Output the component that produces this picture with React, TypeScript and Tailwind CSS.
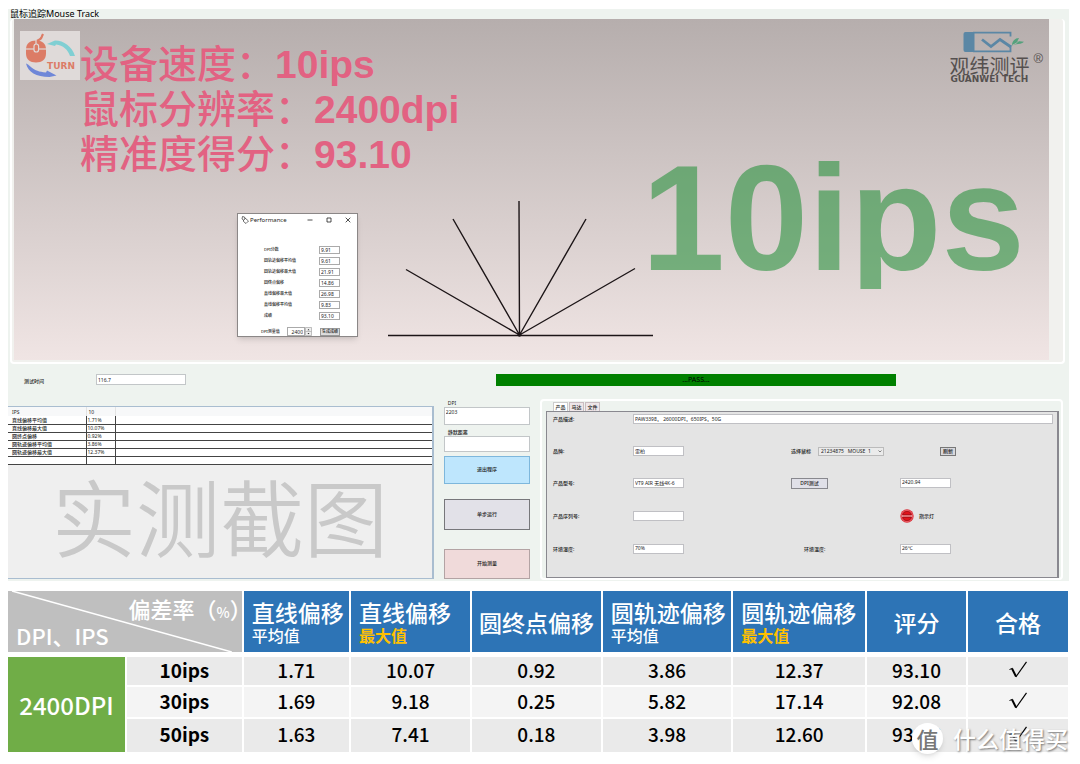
import React, { useId } from "react";

const sans = "font-['Noto_Sans','Noto_Sans_CJK_SC',sans-serif]";
const cjk = "font-['Noto_Sans_CJK_SC',sans-serif]";

function TurnLogo() {
  return (
    <svg viewBox="0 0 60 49" className="h-[49px] w-[60px] shrink-0 bg-[#dfdad9]" aria-label="Turn">
      <path d="M16 13c0-5 4-3 5.500-6.500C22 5 22.500 4 23 3" fill="none" stroke="#dc7c66" strokeWidth="2.200" />
      <path d="M6 18.500c0-6 4-9 10-9s10 3 10 9v4c0 6-4 9-10 9s-10-3-10-9z" fill="#dc7c66" />
      <path d="M5 18h22" stroke="#dfdad9" strokeWidth="1.200" />
      <path d="M16 9v9" stroke="#dfdad9" strokeWidth="1.200" />
      <rect x="14" y="13" width="4.600" height="8" rx="2.300" fill="#dc7c66" stroke="#dfdad9" strokeWidth="1.200" />
      <path d="M27 13l8-3.500c9 0 17 6 20 15.500h-5c-2-6-7-11-14-11.500l-1 1.500z" fill="#80cfd3" />
      <path d="M6 32.500c4 1 6 8 20 9l1-2 9.500 5-7 1.500C16 46 8 41 6 32.500z" fill="#6f87d8" />
      <text x="27" y="37.500" fontSize="9" fontWeight="800" fontFamily="DejaVu Sans" fill="#dc7c66">TURN</text>
    </svg>
  );
}

function Brand() {
  return (
    <div className="flex items-start text-[#55504f]">
      <div className="flex w-20 flex-col items-center">
        <svg viewBox="0 0 62 22" className="mr-1 h-[22px] w-[62px] self-end" aria-hidden="true">
          <path d="M2.500 1h9v20h-9a2 2 0 0 1-2-2V3a2 2 0 0 1 2-2z" fill="#5b87a5" />
          <path d="M10 1.700h37.500V5.500M10 20.300h37.500V14" fill="none" stroke="#5b87a5" strokeWidth="1.800" />
          <path d="M19 8.500l9 7 9-7 11 7.500" fill="none" stroke="#5b87a5" strokeWidth="2.800" />
          <path d="M49 14.500c0-5 4-7.500 7-7.500l-1.500 3 6.500.700c-3 3-8 1.800-12 3.800z" fill="#55a17d" />
          <path d="M49.500 14c3-1 5-2.500 6-4" fill="none" stroke="#c0b8b7" strokeWidth=".8" />
        </svg>
        <span className={`mt-[3px] text-[20px] leading-5 whitespace-nowrap ${cjk}`}>观纬测评</span>
        <span className="text-[9px] leading-[7px] font-bold whitespace-nowrap font-['DejaVu_Sans',sans-serif]">GUANWEI TECH</span>
      </div>
      <span className="mt-5 ml-1 text-[13px] leading-4 font-['Liberation_Sans',sans-serif]">®</span>
    </div>
  );
}

const scores = [
  ["DPI分数", "9.91"],
  ["圆轨迹偏移平均值", "9.61"],
  ["圆轨迹偏移最大值", "21.91"],
  ["圆终点偏移", "14.86"],
  ["直线偏移最大值", "26.98"],
  ["直线偏移平均值", "9.83"],
  ["成绩", "93.10"],
];

function ScoreRow({ label, value }: { label: string; value: string }) {
  const id = useId();
  return (
    <div className="flex h-[11px] items-center justify-between">
      <label htmlFor={id} className="text-[4px] leading-[6px] font-medium">{label}</label>
      <input id={id} defaultValue={value} className="h-2 w-[21px] border border-[#aaa] bg-white pl-px text-[5px] leading-[6px]" />
    </div>
  );
}

function PerformanceWindow() {
  return (
    <section className="absolute top-[194px] left-[223px] h-[124px] w-[121px] overflow-hidden border border-[#8b8787] bg-white text-[#222] shadow-md">
      <header className="flex h-3 items-center pr-[6px] pl-[3px]">
        <svg viewBox="0 0 8 8" className="h-2 w-2" fill="none" stroke="#333" strokeWidth=".7" aria-hidden="true">
          <path d="M1.500.500l2 .5.500 2-1.500 1-1.500-1zM4 2l3.500 3L5 7.500 2.500 5.500 2.500 4" />
        </svg>
        <h2 className="ml-px flex-1 text-[6px] leading-2">Performance</h2>
        <div className="flex gap-[13px]">
          <button aria-label="Minimize"><svg viewBox="0 0 6 6" className="h-[6px] w-[6px]" stroke="#222" strokeWidth=".8"><path d="M.5 3h5" /></svg></button>
          <button aria-label="Maximize"><svg viewBox="0 0 6 6" className="h-[6px] w-[6px]" stroke="#222" strokeWidth=".8" fill="none"><path d="M1 1h4v4H1z" /></svg></button>
          <button aria-label="Close"><svg viewBox="0 0 6 6" className="h-[6px] w-[6px]" stroke="#222" strokeWidth=".8"><path d="M.7.700l4.600 4.600M5.300.700L.7 5.300" /></svg></button>
        </div>
      </header>
      <div className="mt-[18px] pr-[17px] pl-[26px]">
        {scores.map(([l, v]) => <ScoreRow key={l} label={l} value={v} />)}
      </div>
      <div className="mt-[6px] flex items-center pl-[23px] text-[4px] leading-[6px] font-medium">
        <label htmlFor="dpi-measured" className="w-[26px]">DPI测量值</label>
        <input id="dpi-measured" defaultValue="2400" className="h-[9px] w-[18px] border border-[#aaa] pr-px text-right text-[5px] font-normal" />
        <svg viewBox="0 0 7 9" className="h-[9px] w-[7px] bg-[#eee]" aria-hidden="true">
          <path d="M.5.500h6v8h-6zM.5 4.500h6" fill="none" stroke="#aaa" strokeWidth=".7" />
          <path d="M2.500 3.200l1-1.200 1 1.200zM2.500 6l1 1.200 1-1.200z" fill="#222" />
        </svg>
        <button className="ml-2 h-2 w-5 border border-[#999] bg-[#ddd] whitespace-nowrap">生成成绩</button>
      </div>
    </section>
  );
}

function Rays() {
  return (
    <svg viewBox="0 0 268 138" className="absolute top-[180px] left-[373px] h-[138px] w-[268px]" stroke="#1c1517" strokeWidth="1.400" aria-hidden="true">
      <path d="M1 136.500h265M132.500 137L132 2M132.500 136L66 20M132.500 136L19 70.500M132.500 136L199 20M132.500 136L248 69.500" fill="none" />
      <circle cx="132.500" cy="136" r="1.800" stroke="none" fill="#1c1517" />
    </svg>
  );
}

function Headline() {
  const num = "font-bold leading-none font-['Liberation_Sans',Arial,sans-serif]";
  return (
    <div className={`mt-2 text-[39px] leading-[45px] font-medium whitespace-nowrap text-[#e26282] ${cjk}`}>
      <p className="h-[45px]">设备速度：<span className={num}>10ips</span></p>
      <p className="h-[45px]">鼠标分辨率：<span className={num}>2400dpi</span></p>
      <p className="h-[45px]">精准度得分：<span className={num}>93.10</span></p>
    </div>
  );
}

const results = [
  ["直线偏移平均值", "1.71%"],
  ["直线偏移最大值", "10.07%"],
  ["圆终点偏移", "0.92%"],
  ["圆轨迹偏移平均值", "3.86%"],
  ["圆轨迹偏移最大值", "12.37%"],
  ["", ""],
];

function ResultsPane() {
  return (
    <div className="mt-[7px] flex h-[173px] flex-col border-y border-r-2 border-[#a9bdd0] bg-[#efefef]">
      <table className="w-full table-fixed border-collapse bg-white text-left text-[5px] leading-[6px] text-[#222]">
        <colgroup><col className="w-[78px]" /><col className="w-[29px]" /><col /></colgroup>
        <thead>
          <tr className="h-[9px] bg-[#f7f8f9]">
            <th className="pl-1 font-normal">IPS</th>
            <th className="border-l border-[#e3e3e3] p-0 pl-[2px] font-normal">10</th>
            <th className="border-l border-[#e3e3e3] p-0" />
          </tr>
        </thead>
        <tbody>
          {results.map(([l, v], i) => (
            <tr key={i} className="h-2">
              <td className="border-r border-b border-[#444] p-0 pl-1 font-medium whitespace-nowrap">{l}</td>
              <td className="border-r border-b border-[#444] p-0 pl-px">{v}</td>
              <td className="border-b border-[#444] p-0" />
            </tr>
          ))}
        </tbody>
      </table>
      <p className={`flex flex-1 items-center justify-center pb-3 text-[84px] leading-[84px] font-[350] whitespace-nowrap text-[#c9c9c9] ${cjk}`}>实测截图</p>
    </div>
  );
}

function Controls() {
  const field = "w-full border border-[#c2c6c8] bg-white pl-px text-[5px]";
  const button = "w-full border text-[5px] font-medium text-[#222]";
  return (
    <div className="flex flex-col text-[5px] text-[#222]">
      <label htmlFor="dpi" className="h-2 pl-1 leading-2">DPI</label>
      <input id="dpi" defaultValue="2203" className={`h-[18px] pb-2 ${field}`} />
      <label htmlFor="distance" className="mt-[3px] h-2 pl-1 leading-2 font-medium">静默距离</label>
      <input id="distance" defaultValue="" className={`h-4 ${field}`} />
      <button className={`mt-1 h-7 border-[#7db7dc] bg-[#bee6fd] ${button}`}>退出程序</button>
      <button className={`mt-[15px] h-[31px] border-[#77777b] bg-[#e2e1e8] ${button}`}>单步运行</button>
      <button className={`mt-[19px] h-[30px] border-[#b3a3a4] bg-[#f0dada] ${button}`}>开始测量</button>
    </div>
  );
}

function Field({ label, value, wide, pad }: { label: string; value: string; wide?: boolean; pad?: boolean }) {
  const id = useId();
  return (
    <>
      <label htmlFor={id} className={pad ? "pl-[13px] font-medium" : "font-medium"}>{label}</label>
      <input
        id={id}
        defaultValue={value}
        className={`h-[10px] border border-[#c0c0c4] bg-white pb-[2px] pl-px ${wide ? "col-span-3 w-full" : "w-[51px]"}`}
      />
    </>
  );
}

function ProductPanel() {
  const row = "grid grid-cols-[80fr_158fr_109fr_153fr] items-center";
  return (
    <div className="self-start rounded-sm border-2 border-white pt-px pr-[2px] pl-1 text-[5px] leading-[7px] text-[#222]">
      <div role="tablist" className="flex gap-px pl-[7px] font-medium">
        <button role="tab" aria-selected="true" className="h-[9px] w-[15px] border border-b-0 border-[#ccc] bg-white">产品</button>
        <button role="tab" aria-selected="false" className="h-[9px] w-[15px] border border-b-0 border-[#c9bcc0] bg-[#eee6e8]">马达</button>
        <button role="tab" aria-selected="false" className="h-[9px] w-[15px] border border-b-0 border-[#c9bcc0] bg-[#eee6e8]">文件</button>
      </div>
      <div className="h-[167px] border border-r-2 border-[#89888f] bg-[#e4e4e4] pt-px pr-1 pl-[6px]">
        <div className={`h-3 ${row}`}>
          <Field label="产品描述:" value="PAW3398， 26000DPI，650IPS，50G" wide />
        </div>
        <div className={`mt-[10px] h-8 ${row}`}>
          <Field label="品牌:" value="雷柏" />
          <div className="col-span-2 flex items-center">
            <label htmlFor="mouse" className="w-[27px] font-medium whitespace-nowrap">选择鼠标</label>
            <div className="relative w-[66px]">
              <select id="mouse" className="block h-[9px] w-full appearance-none border border-[#bbb] bg-[#ebebeb] pl-[2px]">
                <option>21234875&nbsp;&nbsp; MOUSE&nbsp; 1</option>
              </select>
              <svg viewBox="0 0 4 3" className="absolute top-[3px] right-[2px] h-[3px] w-1" fill="none" stroke="#555" strokeWidth=".7" aria-hidden="true"><path d="M.5.500L2 2 3.500.500" /></svg>
            </div>
            <button className="ml-[56px] h-[9px] w-4 border border-[#777] bg-[#d8d8dc] font-medium">刷新</button>
          </div>
        </div>
        <div className={`h-8 ${row}`}>
          <Field label="产品型号:" value="VT9 AIR 无线4K-6" />
          <button className="h-[11px] w-[37px] border border-[#88888e] bg-[#e0e0e8] font-medium">DPI测试</button>
          <input aria-label="DPI测试" defaultValue="2420.94" className="h-[10px] w-[51px] border border-[#c0c0c4] bg-white pb-[2px] pl-px" />
        </div>
        <div className={`h-[34px] ${row}`}>
          <Field label="产品序列号:" value="" />
          <span />
          <span className="flex items-center gap-[5px] font-medium">
            <svg viewBox="0 0 14 14" className="h-[14px] w-[14px]" aria-hidden="true">
              <circle cx="7" cy="7" r="6.700" fill="#d9303a" />
              <circle cx="7" cy="7" r="5.600" fill="none" stroke="#f4777c" strokeWidth=".6" />
              <circle cx="7" cy="7" r="4.600" fill="#e0141c" stroke="#9c1016" strokeWidth=".7" />
              <path d="M2 7h10" stroke="#fbdada" strokeWidth="1.200" />
              <path d="M3 5.800h8M3 8.200h8" stroke="#8d0c12" strokeWidth=".7" />
            </svg>
            指示灯
          </span>
        </div>
        <div className={`h-8 ${row}`}>
          <Field label="环境湿度:" value="70%" />
          <Field label="环境温度:" value="26℃" pad />
        </div>
      </div>
    </div>
  );
}

const columns = [
  ["直线偏移", "平均值"],
  ["直线偏移", "最大值"],
  ["圆终点偏移", ""],
  ["圆轨迹偏移", "平均值"],
  ["圆轨迹偏移", "最大值"],
  ["评分", ""],
  ["合格", ""],
];

const rows = [
  { name: "10ips", tone: "h-[30px] bg-[#eaeaea]", values: ["1.71", "10.07", "0.92", "3.86", "12.37", "93.10"] },
  { name: "30ips", tone: "h-8 bg-[#f4f4f4]", values: ["1.69", "9.18", "0.25", "5.82", "17.14", "92.08"] },
  { name: "50ips", tone: "h-[35px] bg-[#eaeaea]", values: ["1.63", "7.41", "0.18", "3.98", "12.60", "93.06"] },
];

function Tick() {
  return (
    <svg viewBox="0 0 18 17" className="mx-auto h-[17px] w-[18px]" role="img" aria-label="√" fill="none" stroke="#000">
      <path d="M.5 8.500L3.500 7.300" strokeWidth="1" />
      <path d="M3 7.500L7 15.500" strokeWidth="1.900" />
      <path d="M6.800 16L17.500.800" strokeWidth="1.200" />
    </svg>
  );
}

function SummaryTable() {
  const cell = "border-r-2 border-b-2 border-white p-0 pb-[3px]";
  return (
    <table className={`mt-[10px] w-full table-fixed border-separate border-spacing-0 text-center text-[19px] leading-6 text-black ${cjk}`}>
      <colgroup>
        <col className="w-[11.200%]" /><col className="w-[11%]" /><col className="w-[10.100%]" /><col className="w-[11.400%]" />
        <col className="w-[12.300%]" /><col className="w-[12.300%]" /><col className="w-[12.600%]" /><col className="w-[9.500%]" /><col />
      </colgroup>
      <thead>
        <tr className="h-[66px] text-white">
          <th colSpan={2} className="relative border-r-2 border-b-[5px] border-white bg-[#bfbfbf] bg-clip-padding p-0 font-medium">
            <svg viewBox="0 0 234 61" preserveAspectRatio="none" className="absolute inset-0 h-full w-full" aria-hidden="true">
              <path d="M4 0L224 61" stroke="#fff" strokeWidth="1.500" />
            </svg>
            <div className="relative flex h-[61px] flex-col justify-between py-[5px] text-[22px]">
              <span className="-mr-[10px] self-end whitespace-nowrap">偏差率（<span className="text-sm">%</span>）</span>
              <span className="self-start pl-2">DPI、IPS</span>
            </div>
          </th>
          {columns.map(([title, sub], i) => (
            <th key={i} className={`border-r-2 border-b-[5px] border-white bg-[#2d74b6] bg-clip-padding p-0 text-[23px] leading-[26px] font-medium whitespace-nowrap ${sub ? "pl-2 text-left" : "text-center"}`}>
              {title}
              {sub && <div className={sub === "最大值" ? "text-base leading-5 font-bold text-[#ffc000]" : "text-base leading-5"}>{sub}</div>}
            </th>
          ))}
        </tr>
      </thead>
      <tbody>
        {rows.map((r, i) => (
          <tr key={r.name} className={r.tone}>
            {i === 0 && <th rowSpan={3} className="border-r-2 border-b-2 border-white bg-[#70ad47] p-0 text-[24px] font-medium text-white">2400DPI</th>}
            <th className={`${cell} font-bold`}>{r.name}</th>
            {r.values.map((v, j) => (
              <td key={j} className={`${cell} font-medium`}>{v}</td>
            ))}
            <td className={cell}><Tick /></td>
          </tr>
        ))}
      </tbody>
    </table>
  );
}

function Watermark() {
  return (
    <div className={`absolute right-[2px] bottom-0 flex items-center gap-[10px] text-[23px] leading-8 font-medium whitespace-nowrap text-white ${cjk}`}>
      <span className="flex h-[31px] w-[31px] items-center justify-center rounded-full bg-white text-[22px] text-[#777] shadow-md">值</span>
      <span className="[text-shadow:1px_1px_2px_#777]">什么值得买</span>
    </div>
  );
}

export default function App() {
  return (
    <main className={`min-h-screen bg-white pt-[9px] pr-[10px] pl-2 ${sans}`}>
      <section className="mr-px bg-[#eef3ef] pb-px">
        <h1 className="pl-[2px] text-[9px] leading-[10px] text-black">鼠标追踪Mouse Track</h1>
        <div className="mr-1 ml-[2px] rounded-sm border-2 border-t-0 border-white bg-[#f1f1ee] pr-[14px] pb-[2px] pl-[2px]">
          <div className="relative flex h-[341px] justify-between bg-linear-to-b from-[#b6aead] to-[#f0e5e4] pt-3 pl-[6px]">
            <div className="flex items-start">
              <TurnLogo />
              <Headline />
            </div>
            <div className="flex flex-col items-end pr-[6px]">
              <Brand />
              <p className="mt-[60px] h-[146px] overflow-hidden pr-[18px] text-[150px] leading-none font-bold text-[#2c923f]/60 font-['Liberation_Sans',Arial,sans-serif]">10ips</p>
            </div>
            <Rays />
            <PerformanceWindow />
          </div>
        </div>
        <div className="grid grid-cols-[488fr_400fr_173fr] items-start pt-[10px] pb-[13px] text-[5px] text-[#222]">
          <div className="flex items-center pl-4">
            <label htmlFor="time" className="w-[72px] pt-1 font-medium">测试时间</label>
            <input id="time" defaultValue="116.7" className="h-[11px] w-[90px] border border-[#c2c6c8] bg-white pl-px" />
          </div>
          <output className="block h-3 bg-[#008000] text-center text-[7px] leading-3 text-black">...PASS...</output>
        </div>
        <div className="grid grid-cols-[425fr_86fr_522fr] gap-[10px] pr-[6px]">
          <ResultsPane />
          <Controls />
          <ProductPanel />
        </div>
      </section>
      <div className="relative">
        <SummaryTable />
        <Watermark />
      </div>
    </main>
  );
}
